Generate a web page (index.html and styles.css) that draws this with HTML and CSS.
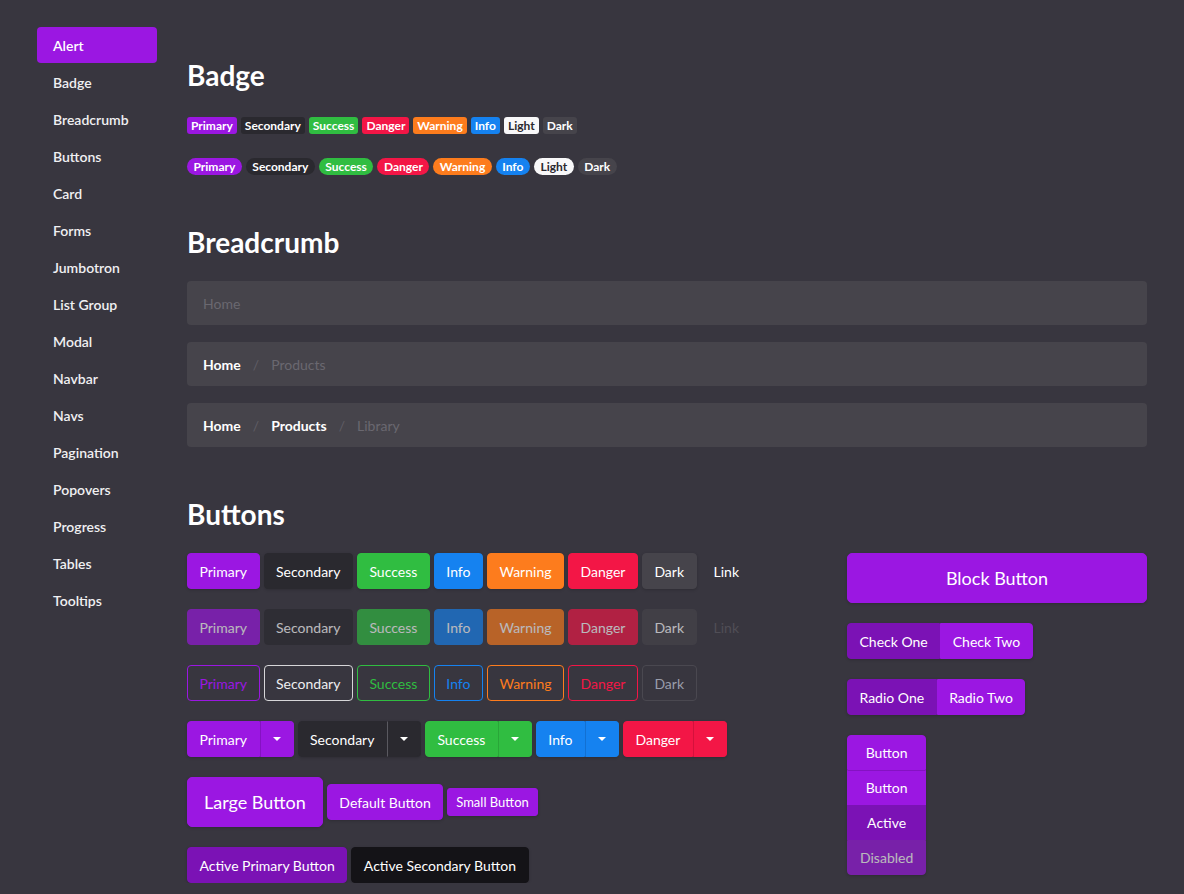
FILE: index.html
```html
<!DOCTYPE html>
<html lang="en">
<head>
<meta charset="utf-8">
<title>Theme Preview</title>
<link rel="stylesheet" href="styles.css">
</head>
<body>
<div class="container">
  <nav class="sidebar">
    <a class="nav-item active" href="#">Alert</a>
    <a class="nav-item" href="#">Badge</a>
    <a class="nav-item" href="#">Breadcrumb</a>
    <a class="nav-item" href="#">Buttons</a>
    <a class="nav-item" href="#">Card</a>
    <a class="nav-item" href="#">Forms</a>
    <a class="nav-item" href="#">Jumbotron</a>
    <a class="nav-item" href="#">List Group</a>
    <a class="nav-item" href="#">Modal</a>
    <a class="nav-item" href="#">Navbar</a>
    <a class="nav-item" href="#">Navs</a>
    <a class="nav-item" href="#">Pagination</a>
    <a class="nav-item" href="#">Popovers</a>
    <a class="nav-item" href="#">Progress</a>
    <a class="nav-item" href="#">Tables</a>
    <a class="nav-item" href="#">Tooltips</a>
  </nav>

  <main class="main">
    <section class="section">
      <h2>Badge</h2>
      <div class="badges">
        <div class="badge-row">
          <span class="badge primary">Primary</span>
          <span class="badge secondary">Secondary</span>
          <span class="badge success">Success</span>
          <span class="badge danger">Danger</span>
          <span class="badge warning">Warning</span>
          <span class="badge info">Info</span>
          <span class="badge light">Light</span>
          <span class="badge dark">Dark</span>
        </div>
        <div class="badge-row pills">
          <span class="badge primary">Primary</span>
          <span class="badge secondary">Secondary</span>
          <span class="badge success">Success</span>
          <span class="badge danger">Danger</span>
          <span class="badge warning">Warning</span>
          <span class="badge info">Info</span>
          <span class="badge light">Light</span>
          <span class="badge dark">Dark</span>
        </div>
      </div>
    </section>

    <section class="section">
      <h2>Breadcrumb</h2>
      <ol class="breadcrumb">
        <li class="crumb active">Home</li>
      </ol>
      <ol class="breadcrumb">
        <li class="crumb"><a href="#">Home</a></li>
        <li class="crumb active">Products</li>
      </ol>
      <ol class="breadcrumb">
        <li class="crumb"><a href="#">Home</a></li>
        <li class="crumb"><a href="#">Products</a></li>
        <li class="crumb active">Library</li>
      </ol>
    </section>

    <section class="section">
      <h2>Buttons</h2>
      <div class="btn-cols">
        <div class="btn-left">
          <div class="btn-row">
            <button class="btn primary">Primary</button>
            <button class="btn secondary">Secondary</button>
            <button class="btn success">Success</button>
            <button class="btn info">Info</button>
            <button class="btn warning">Warning</button>
            <button class="btn danger">Danger</button>
            <button class="btn dark">Dark</button>
            <button class="btn link">Link</button>
          </div>
          <div class="btn-row">
            <button class="btn primary disabled">Primary</button>
            <button class="btn secondary disabled">Secondary</button>
            <button class="btn success disabled">Success</button>
            <button class="btn info disabled">Info</button>
            <button class="btn warning disabled">Warning</button>
            <button class="btn danger disabled">Danger</button>
            <button class="btn dark disabled">Dark</button>
            <button class="btn link link-disabled">Link</button>
          </div>
          <div class="btn-row">
            <button class="btn outline primary">Primary</button>
            <button class="btn outline secondary">Secondary</button>
            <button class="btn outline success">Success</button>
            <button class="btn outline info">Info</button>
            <button class="btn outline warning">Warning</button>
            <button class="btn outline danger">Danger</button>
            <button class="btn outline dark">Dark</button>
          </div>
          <div class="btn-row">
            <div class="split primary">
              <button class="btn primary">Primary</button>
              <button class="btn primary toggle"><span class="caret"></span></button>
            </div>
            <div class="split secondary">
              <button class="btn secondary">Secondary</button>
              <button class="btn secondary toggle"><span class="caret"></span></button>
            </div>
            <div class="split success">
              <button class="btn success">Success</button>
              <button class="btn success toggle"><span class="caret"></span></button>
            </div>
            <div class="split info">
              <button class="btn info">Info</button>
              <button class="btn info toggle"><span class="caret"></span></button>
            </div>
            <div class="split danger">
              <button class="btn danger">Danger</button>
              <button class="btn danger toggle"><span class="caret"></span></button>
            </div>
          </div>
          <div class="btn-row">
            <button class="btn primary btn-lg">Large Button</button>
            <button class="btn primary">Default Button</button>
            <button class="btn primary btn-sm">Small Button</button>
          </div>
          <div class="btn-row">
            <button class="btn primary-active">Active Primary Button</button>
            <button class="btn secondary-active">Active Secondary Button</button>
          </div>
        </div>

        <div class="btn-right">
          <button class="btn primary btn-block">Block Button</button>
          <div class="group-h">
            <button class="btn primary-active">Check One</button>
            <button class="btn primary">Check Two</button>
          </div>
          <div class="group-h">
            <button class="btn primary-active">Radio One</button>
            <button class="btn primary">Radio Two</button>
          </div>
          <div class="group-v">
            <button class="btn primary">Button</button>
            <button class="btn primary sep">Button</button>
            <button class="btn primary-active">Active</button>
            <button class="btn primary disabled">Disabled</button>
          </div>
        </div>
      </div>
    </section>
  </main>
</div>
</body>
</html>
```

FILE: styles.css
```css
* {
  box-sizing: border-box;
}

body {
  margin: 0;
  background: #38363f;
  color: #fff;
  font-family: Lato, "Open Sans", "DejaVu Sans", sans-serif;
  font-size: 14px;
}

.container {
  width: 1110px;
  margin: 0 auto;
  padding-top: 27px;
  display: flex;
  gap: 30px;
  align-items: flex-start;
}

/* Sidebar */
.sidebar {
  width: 120px;
  flex: none;
  display: flex;
  flex-direction: column;
}

.nav-item {
  display: block;
  padding: 8px 16px;
  line-height: 21px;
  color: #f0f0f2;
  font-weight: 600;
  text-decoration: none;
  border-radius: 4px;
}

.nav-item.active {
  background: #9b17e2;
  color: #fff;
  height: 36px;
  margin-bottom: 1px;
  padding-top: 7.5px;
}

/* Main */
.main {
  width: 960px;
  flex: none;
  padding-top: 31px;
}

h2 {
  margin: 0 0 22px;
  font-size: 28px;
  line-height: 34px;
  font-weight: 700;
}

.section + .section {
  margin-top: 50px;
}

/* Colour variants */
.primary { --c: #9b17e2; --d: #8412c2; }
.secondary { --c: #2a292f; --d: #5a5960; }
.success { --c: #30bd41; --d: #29a638; }
.danger { --c: #f31646; --d: #d4113c; }
.warning { --c: #fd7c1d; --d: #e06c15; }
.info { --c: #1582f0; --d: #1270d2; }
.light { --c: #f8f8f9; }
.dark { --c: #46444b; --d: #3a3840; }
.primary-active { --c: #7b12b5; }
.secondary-active { --c: #141317; }

/* Badges */
.badges {
  padding-top: 3px;
}

.badge-row {
  display: flex;
  gap: 4px;
}

.badge-row + .badge-row {
  margin-top: 24px;
}

.badge {
  display: inline-block;
  height: 17px;
  line-height: 17px;
  padding: 0 4px;
  font-size: 12px;
  font-weight: 700;
  border-radius: 3px;
  background: var(--c);
  color: #fff;
}

.badge.light {
  color: #2a292f;
}

.pills .badge {
  padding: 0 6.5px;
  border-radius: 9px;
}

/* Breadcrumb */
.breadcrumb {
  list-style: none;
  margin: 0;
  padding: 0 16px;
  height: 44px;
  display: flex;
  align-items: center;
  background: #46444b;
  border-radius: 4px;
}

.breadcrumb + .breadcrumb {
  margin-top: 17px;
}

.crumb a {
  color: #fff;
  font-weight: 700;
  text-decoration: none;
}

.crumb.active {
  color: #6a6870;
}

.crumb + .crumb::before {
  content: "/";
  padding: 0 12px;
  color: #5f5d65;
  font-weight: 400;
}

/* Buttons */
.btn-cols {
  display: flex;
  gap: 30px;
}

.btn-left {
  width: 630px;
  flex: none;
}

.btn-right {
  width: 300px;
  flex: none;
  display: flex;
  flex-direction: column;
  align-items: flex-start;
  gap: 20px;
}

.btn-row {
  display: flex;
  gap: 4px;
  align-items: center;
}

.btn-row + .btn-row {
  margin-top: 20px;
}

.btn {
  display: inline-flex;
  align-items: center;
  justify-content: center;
  height: 36px;
  padding: 0 11.5px;
  margin: 0;
  font-family: inherit;
  font-size: 14px;
  font-weight: 400;
  color: #fff;
  background: var(--c);
  border: 1px solid var(--c);
  border-radius: 4px;
  box-shadow: 0 1px 3px rgba(0, 0, 0, 0.18);
  cursor: pointer;
  white-space: nowrap;
}

.btn.disabled {
  opacity: 0.65;
  box-shadow: none;
}

.btn.link {
  background: transparent;
  border-color: transparent;
  box-shadow: none;
  padding: 0 13px;
}

.btn.link-disabled {
  color: #504e56;
}

.btn.outline {
  background: transparent;
  color: var(--c);
  box-shadow: none;
}

.btn.outline.secondary {
  border-color: #d6d6d8;
  color: #eeeef0;
}

.btn.outline.dark {
  border-color: #4a4850;
  color: #9a9dab;
}

/* Split buttons */
.split {
  display: inline-flex;
  border-radius: 4px;
  box-shadow: 0 1px 3px rgba(0, 0, 0, 0.18);
}

.split .btn {
  box-shadow: none;
  border-radius: 4px 0 0 4px;
}

.split .btn.toggle {
  padding: 0 12px;
  border-radius: 0 4px 4px 0;
  border-left-color: var(--d);
}

.caret {
  display: inline-block;
  width: 0;
  height: 0;
  border-top: 4px solid #fff;
  border-left: 4px solid transparent;
  border-right: 4px solid transparent;
}

/* Sizes */
.btn-lg {
  height: 50px;
  padding: 0 16px;
  font-size: 18px;
  border-radius: 5px;
}

.btn-sm {
  height: 28px;
  padding: 0 8px;
  font-size: 13px;
  border-radius: 3px;
}

.btn-block {
  width: 300px;
  height: 50px;
  font-size: 18px;
  border-radius: 5px;
}

/* Groups */
.group-h {
  display: inline-flex;
  border-radius: 4px;
  box-shadow: 0 1px 3px rgba(0, 0, 0, 0.18);
}

.group-h .btn {
  border-radius: 0;
  box-shadow: none;
}

.group-h .btn:first-child {
  border-radius: 4px 0 0 4px;
}

.group-h .btn:last-child {
  border-radius: 0 4px 4px 0;
}

.group-v {
  display: inline-flex;
  flex-direction: column;
  border-radius: 4px;
  box-shadow: 0 1px 3px rgba(0, 0, 0, 0.18);
}

.group-v .btn {
  height: 35px;
  padding: 0 12px;
  border-radius: 0;
  box-shadow: none;
}

.group-v .btn:first-child {
  border-radius: 4px 4px 0 0;
}

.group-v .btn:last-child {
  border-radius: 0 0 4px 4px;
}

.group-v .btn.sep {
  border-top-color: #8412c2;
}
```
